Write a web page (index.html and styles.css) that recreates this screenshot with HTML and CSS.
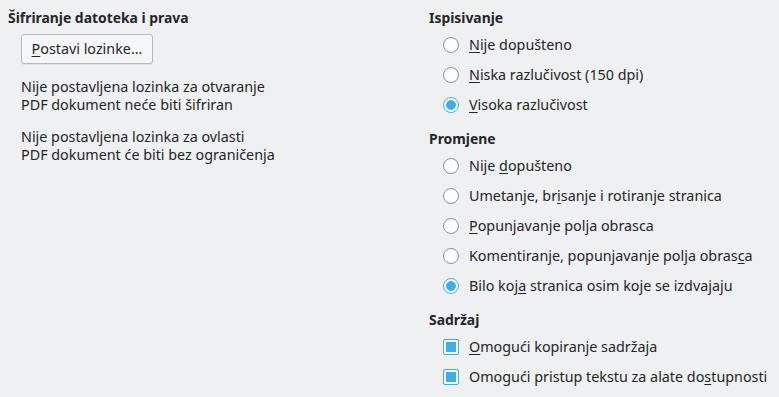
FILE: index.html
```html
<!DOCTYPE html>
<html lang="hr">
<head>
    <meta charset="UTF-8">
    <title>Sigurnost</title>
    <link rel="stylesheet" href="styles.css">
</head>
<body>
    <div class="page">
        <div class="col col-left">
            <div class="heading">Šifriranje datoteka i prava</div>
            <div class="indent">
                <button class="btn"><span class="mn">P</span>ostavi lozinke...</button>
                <p class="note">Nije postavljena lozinka za otvaranje<br>PDF dokument neće biti šifriran</p>
                <p class="note">Nije postavljena lozinka za ovlasti<br>PDF dokument će biti bez ograničenja</p>
            </div>
        </div>

        <div class="col col-right">
            <div class="group">
                <div class="heading">Ispisivanje</div>
                <label class="row"><input type="radio" name="print"><span><span class="mn">N</span>ije dopušteno</span></label>
                <label class="row"><input type="radio" name="print"><span><span class="mn">N</span>iska razlučivost (150 dpi)</span></label>
                <label class="row"><input type="radio" name="print" checked><span><span class="mn">V</span>isoka razlučivost</span></label>
            </div>
            <div class="group">
                <div class="heading">Promjene</div>
                <label class="row"><input type="radio" name="change"><span>Nije <span class="mn">d</span>opušteno</span></label>
                <label class="row"><input type="radio" name="change"><span>Umetanje, br<span class="mn">i</span>sanje i rotiranje stranica</span></label>
                <label class="row"><input type="radio" name="change"><span><span class="mn">P</span>opunjavanje polja obrasca</span></label>
                <label class="row"><input type="radio" name="change"><span>Komentiranje, popunjavanje polja obras<span class="mn">c</span>a</span></label>
                <label class="row"><input type="radio" name="change" checked><span>Bilo koj<span class="mn">a</span> stranica osim koje se izdvajaju</span></label>
            </div>
            <div class="group">
                <div class="heading">Sadržaj</div>
                <label class="row"><input type="checkbox" checked><span><span class="mn">O</span>mogući kopiranje sadržaja</span></label>
                <label class="row"><input type="checkbox" checked><span>Omogući pristup tekstu za alate do<span class="mn">s</span>tupnosti</span></label>
            </div>
        </div>
    </div>
</body>
</html>
```

FILE: styles.css
```css
body {
    margin: 0;
    background-color: #eff0f1;
    color: #232627;
    font-family: "Noto Sans", "DejaVu Sans", sans-serif;
    font-size: 14.33px;
    line-height: 18px;
    overflow: hidden;
}
.page {
    display: flex;
    padding: 9px 0 0 8px;
}
.col-left {
    width: 421px;
}
.col-right {
    flex: 1;
    display: flex;
    flex-direction: column;
    gap: 10px;
}
.heading {
    font-weight: bold;
    font-size: 13.9px;
    height: 18px;
}
.indent {
    padding: 7px 0 0 13px;
}
.btn {
    width: 132px;
    height: 30px;
    font: inherit;
    color: inherit;
    background-color: #f5f6f7;
    border: 1px solid #b8babc;
    border-radius: 3px;
    box-shadow: 0 1px 1px rgba(0, 0, 0, 0.06);
    padding: 0;
}
.note {
    margin: 14px 0 0 0;
}
.mn {
    text-decoration: underline;
    text-underline-offset: 2px;
}
.group {
    display: flex;
    flex-direction: column;
}
.group .heading {
    margin-bottom: 3px;
}
.row {
    display: flex;
    align-items: center;
    height: 30px;
    padding-left: 14px;
    gap: 10px;
}
.row input {
    appearance: none;
    -webkit-appearance: none;
    margin: 0;
    width: 16px;
    height: 16px;
    box-sizing: border-box;
    border: 1px solid #8e9092;
    background-color: #fcfcfc;
    flex: none;
}
.row input[type="radio"] {
    border-radius: 50%;
}
.row input[type="radio"]:checked {
    border-color: #3daee9;
    background: radial-gradient(circle, #3daee9 0, #3daee9 4.5px, #fcfcfc 5.2px);
}
.row input[type="checkbox"] {
    border-color: #3daee9;
    border-radius: 2px;
    background-color: #3daee9;
    box-shadow: inset 0 0 0 2px #fcfcfc;
}
```
